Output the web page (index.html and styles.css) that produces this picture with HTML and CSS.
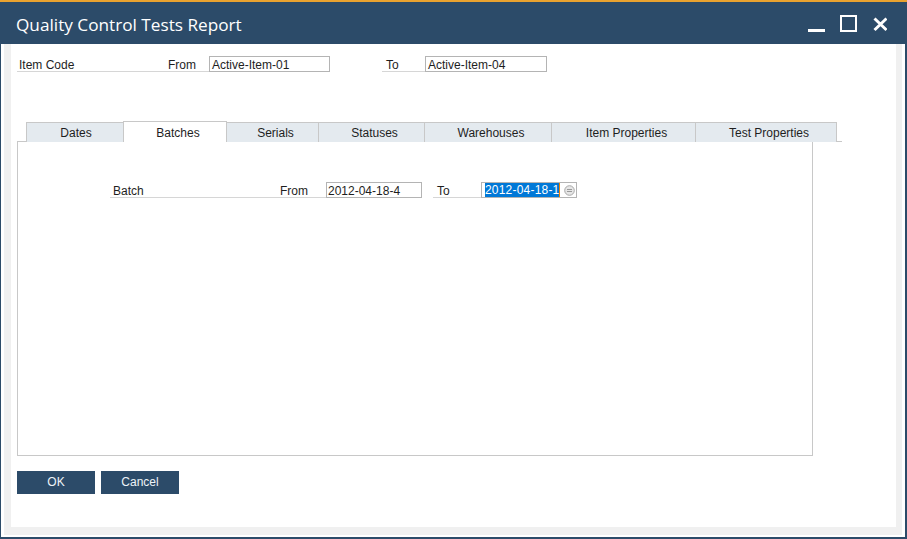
FILE: index.html
```html
<!DOCTYPE html>
<html>
<head>
<meta charset="utf-8">
<link rel="stylesheet" href="styles.css">
</head>
<body>
<div class="window">
  <div class="titlebar">
    <div class="title">Quality Control Tests Report</div>
    <svg class="controls" width="79" height="17" viewBox="0 0 79 17">
      <rect x="0" y="14" width="17" height="3" fill="#fff"/>
      <rect x="33" y="1" width="15" height="15" fill="none" stroke="#fff" stroke-width="2"/>
      <path d="M66.5 3.5 L78.5 15 M78.5 3.5 L66.5 15" stroke="#fff" stroke-width="3" fill="none"/>
    </svg>
  </div>
  <div class="frame">
    <div class="gray">
      <div class="content">
        <div class="row top-row">
          <div class="label label-item"><span>Item Code</span><span class="from-lbl">From</span></div>
          <div class="field f1">Active-Item-01</div>
          <div class="label label-to"><span>To</span></div>
          <div class="field f2">Active-Item-04</div>
        </div>

        <div class="tabbar">
          <div class="tab t-dates">Dates</div>
          <div class="tab t-batches active">Batches</div>
          <div class="tab t-serials">Serials</div>
          <div class="tab t-statuses">Statuses</div>
          <div class="tab t-wh">Warehouses</div>
          <div class="tab t-ip">Item Properties</div>
          <div class="tab t-tp">Test Properties</div>
        </div>
        <div class="panel">
          <div class="row batch-row">
            <div class="label label-batch"><span>Batch</span><span class="from-lbl2">From</span></div>
            <div class="field f3">2012-04-18-4</div>
            <div class="label label-to2"><span>To</span></div>
            <div class="field f4"><span class="sel">2012-04-18-1</span><span class="caret"></span>
              <svg class="pick" width="11" height="11" viewBox="0 0 11 11">
                <circle cx="5.5" cy="5.5" r="4.8" fill="#e6e6e6" stroke="#a8a8a8" stroke-width="1"/>
                <path d="M3 4.5 H8 M3 6.5 H8" stroke="#9a9a9a" stroke-width="1"/>
              </svg>
            </div>
          </div>
        </div>

        <div class="buttons">
          <div class="btn">OK</div>
          <div class="btn">Cancel</div>
        </div>
      </div>
    </div>
  </div>
</div>
</body>
</html>
```

FILE: styles.css
```css
* { box-sizing: border-box; }
html, body { margin: 0; padding: 0; }
body {
  width: 907px;
  height: 539px;
  overflow: hidden;
  font-family: "Liberation Sans", Arial, sans-serif;
  font-size: 12px;
  color: #1e1e1e;
  background: #fff;
}
.window {
  width: 907px;
  height: 539px;
  display: flex;
  flex-direction: column;
}
.titlebar {
  height: 44px;
  border-top: 2px solid #e9a22f;
  background: #2c4b69;
  display: flex;
  align-items: center;
  padding-left: 16px;
  padding-right: 20px;
}
.title {
  font-family: "Open Sans", "Noto Sans", sans-serif;
  font-size: 17.2px;
  color: #fff;
  flex: 1;
  margin-top: 2px;
}
.controls { display: block; }

.frame {
  flex: 1;
  display: flex;
  border-left: 1px solid #2c4b69;
  border-right: 2px solid #2c4b69;
  border-bottom: 2px solid #2c4b69;
  padding: 0 3px 2px 3px;
  background: #fff;
}
.gray {
  flex: 1;
  display: flex;
  background: #f0f0f0;
  padding: 0 6px 8px 7px;
}
.content {
  flex: 1;
  background: #fff;
  padding: 12px 0 0 6px;
  display: flex;
  flex-direction: column;
}

.row { display: flex; align-items: flex-end; height: 16px; }
.label {
  height: 16px;
  border-bottom: 1px solid #d6d6d6;
  display: flex;
  align-items: center;
  line-height: 14px;
  padding-top: 2px;
}
.label-item { width: 192px; padding-left: 2px; }
.label-item .from-lbl { margin-left: auto; width: 41px; }
.label-to { width: 43px; margin-left: 52px; padding-left: 4px; }
.field {
  height: 16px;
  border: 1px solid #b4b4b4;
  background: #fff;
  line-height: 14px;
  padding-left: 2px;
  padding-top: 1px;
  white-space: nowrap;
  overflow: hidden;
  display: flex;
  align-items: center;
}
.f1 { width: 121px; }
.f2 { width: 122px; }

.tabbar {
  margin-top: 50px;
  width: 825px;
  padding-left: 9px;
  border-bottom: 1px solid #c8c8c8;
  display: flex;
  height: 20px;
}
.tab {
  height: 20px;
  border: 1px solid #c8c8c8;
  border-bottom: none;
  background: #e4eaef;
  text-align: center;
  line-height: 20px;
  margin-left: -1px;
  padding-left: 6px;
}
.tab.t-dates { margin-left: 0; padding-left: 2px; }
.tab.active {
  background: #fff;
  height: 21px;
  margin-top: -1px;
  margin-bottom: -1px;
  line-height: 22px;
  position: relative;
  z-index: 1;
}
.t-dates { width: 98px; }
.t-batches { width: 104px; }
.t-serials { width: 93px; }
.t-statuses { width: 107px; }
.t-wh { width: 128px; }
.t-ip { width: 145px; }
.t-tp { width: 142px; }

.panel {
  width: 796px;
  height: 314px;
  border: 1px solid #c8c8c8;
  border-top: none;
  padding: 40px 0 0 92px;
}
.label-batch { width: 216px; padding-left: 3px; }
.label-batch .from-lbl2 { margin-left: auto; width: 46px; }
.f3 { width: 96px; padding-left: 1px; }
.label-to2 { width: 48px; margin-left: 11px; padding-left: 4px; }
.f4 { width: 96px; padding-left: 3px; padding-top: 0; position: relative; }
.sel {
  background: #0078d7;
  color: #fff;
  height: 14px;
  line-height: 15px;
  letter-spacing: 0.2px;
  display: inline-block;
}
.caret {
  display: inline-block;
  width: 1px;
  height: 14px;
  background: #f08000;
}
.pick { margin-left: 4px; flex-shrink: 0; }

.buttons {
  display: flex;
  gap: 6px;
  margin-top: 15px;
}
.btn {
  width: 78px;
  height: 23px;
  background: #2c4b69;
  color: #eef3f8;
  text-align: center;
  line-height: 22px;
}
```
